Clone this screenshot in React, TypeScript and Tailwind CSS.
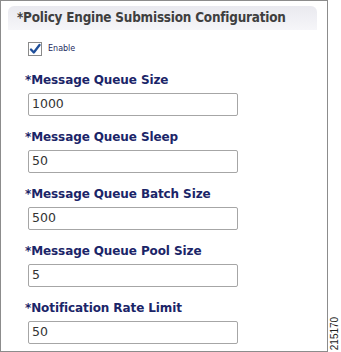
import React from "react";

const fields = [
  { label: "*Message Queue Size", value: "1000" },
  { label: "*Message Queue Sleep", value: "50" },
  { label: "*Message Queue Batch Size", value: "500" },
  { label: "*Message Queue Pool Size", value: "5" },
  { label: "*Notification Rate Limit", value: "50" },
];

export default function App() {
  return (
    <div className="relative w-[341px] h-[352px] bg-white" style={{ fontFamily: '"DejaVu Sans", Verdana, sans-serif' }}>
      <div className="w-[328px] h-[352px] border-[1.5px] border-[#8c8c8c] pt-[5px]">
        <div className="ml-[7px] mr-[10px] h-[24px] rounded-t-[6px] bg-gradient-to-b from-[#e9e9ef] to-[#f6f6f9] flex items-center pl-[9px]">
          <span className="text-[13.4px] font-bold text-[#3f3f3f] tracking-[-0.2px]" style={{ fontFamily: '"DejaVu Sans Condensed", "Liberation Sans", sans-serif' }}>
            *Policy Engine Submission Configuration
          </span>
        </div>
        <div className="flex items-center mt-[12px] ml-[27px] h-[14px]">
          <div className="w-[14px] h-[14px] border border-[#8a8a8a] bg-white flex items-center justify-center">
            <svg width="12" height="12" viewBox="0 0 12 12">
              <path d="M2 6.5 L4.8 9.5 L10.5 2" stroke="#1f4f9a" strokeWidth="2.3" fill="none" strokeLinecap="round" strokeLinejoin="round" />
            </svg>
          </div>
          <span className="ml-[6px] text-[8px] text-[#1e2a5e]">Enable</span>
        </div>
        <div className="mt-[14px] flex flex-col gap-[11px]">
          {fields.map((f) => (
            <div key={f.label} className="flex flex-col">
              <div className="h-[20px] flex items-center pl-[24px]">
                <span className="text-[12px] font-bold text-[#1b2568] tracking-[-0.1px]">{f.label}</span>
              </div>
              <div className="mt-[3px] ml-[27px] w-[210px] h-[23px] border border-[#a6a6a6] rounded-[2px] flex items-center pl-[3px] text-[12.5px] text-[#333]">
                {f.value}
              </div>
            </div>
          ))}
        </div>
      </div>
      <div className="absolute left-[329px] top-[317px] w-[12px] h-[33px] flex items-center justify-center">
        <span className="-rotate-90 text-[10px] text-[#222] whitespace-nowrap" style={{ fontFamily: '"Liberation Sans", Arial, sans-serif' }}>215170</span>
      </div>
    </div>
  );
}
